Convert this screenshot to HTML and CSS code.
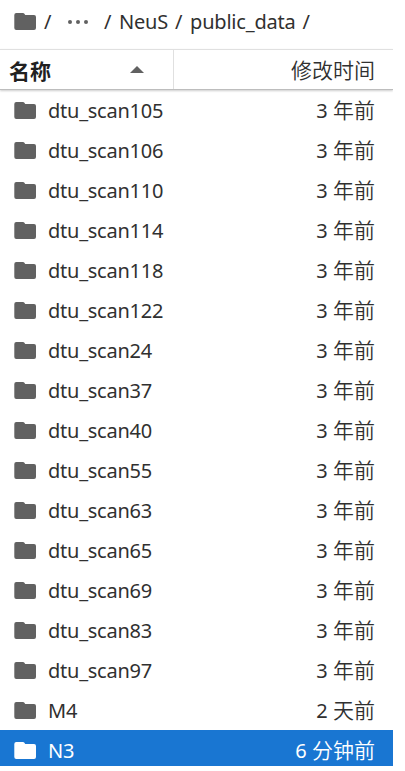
FILE: index.html
```
<!DOCTYPE html>
<html lang="zh-CN">
<head>
  <meta charset="UTF-8" />
  <meta name="viewport" content="width=device-width, initial-scale=1.0"/>
  <title>public_data</title>
  <link rel="stylesheet" href="styles.css">
</head>
<body>
  <svg class="symbols" width="0" height="0">
    <symbol id="folder" viewBox="0 0 22 17">
      <path d="M2.3 0H8.9Q9.9 0 10.4 .8L11.2 2H20Q22 2 22 4V15Q22 17 20 17H2.3Q.3 17 .3 15V2Q.3 0 2.3 0Z"/>
    </symbol>
  </svg>

  <div class="file-browser">
    <nav class="crumbs">
      <svg class="folder"><use href="#folder"/></svg>
      <span class="sep first">/</span>
      <svg class="dots" viewBox="0 0 20 4"><circle cx="2" cy="2" r="2"/><circle cx="10" cy="2" r="2"/><circle cx="18" cy="2" r="2"/></svg>
      <span class="sep">/</span>
      <span class="crumb">NeuS</span>
      <span class="sep">/</span>
      <span class="crumb">public_data</span>
      <span class="sep">/</span>
    </nav>

    <div class="header">
      <div class="header-name">
        <span>名称</span>
        <svg class="sort" viewBox="0 0 14 7"><path d="M0 7L7 0L14 7Z"/></svg>
      </div>
      <div class="header-modified">修改时间</div>
    </div>

    <ul class="listing" id="listing"></ul>
  </div>

  <script>
    const files = [
      ["dtu_scan105", "3", "年前"],
      ["dtu_scan106", "3", "年前"],
      ["dtu_scan110", "3", "年前"],
      ["dtu_scan114", "3", "年前"],
      ["dtu_scan118", "3", "年前"],
      ["dtu_scan122", "3", "年前"],
      ["dtu_scan24", "3", "年前"],
      ["dtu_scan37", "3", "年前"],
      ["dtu_scan40", "3", "年前"],
      ["dtu_scan55", "3", "年前"],
      ["dtu_scan63", "3", "年前"],
      ["dtu_scan65", "3", "年前"],
      ["dtu_scan69", "3", "年前"],
      ["dtu_scan83", "3", "年前"],
      ["dtu_scan97", "3", "年前"],
      ["M4", "2", "天前"],
      ["N3", "6", "分钟前"]
    ];
    const selected = "N3";

    document.getElementById("listing").innerHTML = files.map(([name, count, unit]) => `
      <li class="item${name === selected ? " selected" : ""}">
        <svg class="folder"><use href="#folder"/></svg>
        <span class="name">${name}</span>
        <span class="modified">${count} <span class="unit">${unit}</span></span>
      </li>`).join("");
  </script>
</body>
</html>
```

FILE: styles.css
```
body {
  margin: 0;
  background: #fff;
  color: #303030;
  font-family: "Noto Sans", "Noto Sans CJK SC", sans-serif;
  font-size: 20px;
}

.symbols {
  position: absolute;
}

.file-browser {
  width: 393px;
  height: 766px;
  overflow: hidden;
}

.folder {
  width: 22px;
  height: 17px;
  flex: none;
  fill: #616161;
}

.crumbs {
  display: flex;
  align-items: center;
  height: 43px;
  padding: 0 0 6px 14px;
  white-space: nowrap;
}

.crumb {
  letter-spacing: -0.2px;
}

.sep {
  width: 8px;
  margin: 0 7px;
}

.sep.first {
  margin: 0 16px 0 8px;
}

.dots {
  width: 20px;
  height: 4px;
  margin-right: 9px;
  fill: #616161;
}

.header {
  display: flex;
  box-sizing: border-box;
  height: 41px;
  border-top: 1px solid #e0e0e0;
  border-bottom: 1px solid #bdbdbd;
  box-shadow: 0 1px 2px rgba(0, 0, 0, 0.2);
  font-family: "Noto Sans CJK SC", sans-serif;
  font-size: 21px;
  line-height: 38px;
}

.header-name {
  display: flex;
  align-items: center;
  justify-content: space-between;
  box-sizing: border-box;
  width: 174px;
  padding: 0 29px 0 9px;
  border-right: 1px solid #e0e0e0;
  font-weight: bold;
  color: #212121;
}

.sort {
  width: 14px;
  height: 7px;
  fill: #616161;
}

.header-modified {
  flex: 1;
  padding-right: 18px;
  text-align: right;
  font-weight: 350;
}

.listing {
  list-style: none;
  margin: 0;
  padding: 0;
}

.item {
  display: flex;
  align-items: center;
  box-sizing: border-box;
  height: 40px;
  padding: 0 18px 0 14px;
  line-height: 38px;
}

.name {
  flex: 1;
  margin: 2px 0 0 12px;
  letter-spacing: -0.25px;
}

.unit {
  font-family: "Noto Sans CJK SC", sans-serif;
  font-size: 21px;
  font-weight: 350;
}

.selected {
  background: #1976d2;
  color: #fff;
}

.selected .folder {
  fill: #fff;
}
```
